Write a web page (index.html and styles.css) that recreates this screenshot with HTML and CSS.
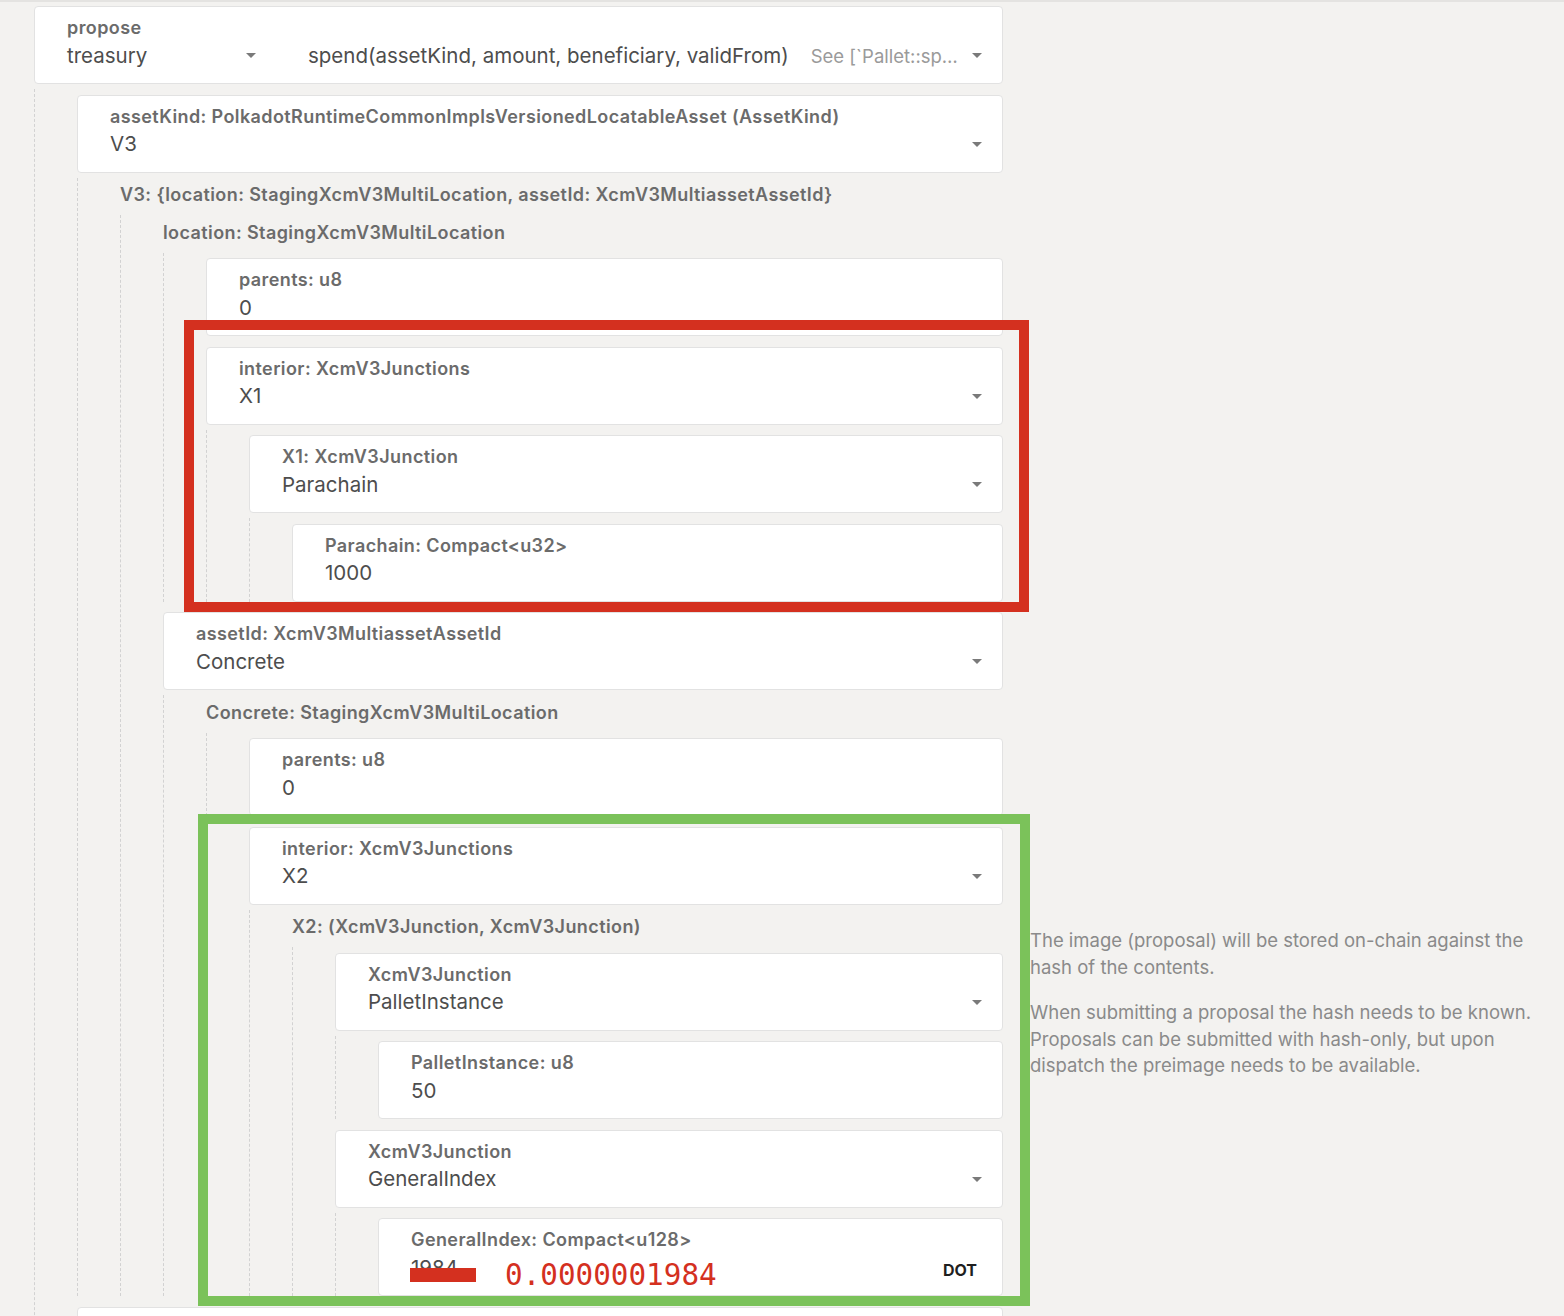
FILE: index.html
```html
<!doctype html>
<html lang="en">
  <head>
    <meta charset="UTF-8" />
    <meta name="viewport" content="width=device-width, initial-scale=1.0" />
    <title>Submit preimage</title>
    <link rel="stylesheet" href="styles.css">
  </head>
  <body>
    <main class="page">
      <section class="params">
        <div class="field">
          <div class="card">
            <div class="control control-section">
              <div class="label">propose</div>
              <div class="value-row"><span class="value">treasury</span><i class="caret"></i></div>
            </div>
            <div class="control">
              <div class="label">&nbsp;</div>
              <div class="value-row">
                <span class="value">spend(assetKind, amount, beneficiary, validFrom)</span>
                <span class="method-doc">See [`Pallet::sp…</span>
                <i class="caret"></i>
              </div>
            </div>
          </div>
          <div class="nest">
            <div class="field">
              <div class="card">
                <div class="control">
                  <div class="label">assetKind: PolkadotRuntimeCommonImplsVersionedLocatableAsset (AssetKind)</div>
                  <div class="value-row"><span class="value">V3</span><i class="caret"></i></div>
                </div>
              </div>
              <div class="nest">
                <div class="field">
                  <div class="struct-label">V3: {location: StagingXcmV3MultiLocation, assetId: XcmV3MultiassetAssetId}</div>
                  <div class="nest">
                    <div class="field">
                      <div class="struct-label">location: StagingXcmV3MultiLocation</div>
                      <div class="nest">
                        <div class="card">
                          <div class="control">
                            <div class="label">parents: u8</div>
                            <div class="value-row"><span class="value">0</span></div>
                          </div>
                        </div>
                        <div class="field">
                          <div class="card">
                            <div class="control">
                              <div class="label">interior: XcmV3Junctions</div>
                              <div class="value-row"><span class="value">X1</span><i class="caret"></i></div>
                            </div>
                          </div>
                          <div class="nest">
                            <div class="field">
                              <div class="card">
                                <div class="control">
                                  <div class="label">X1: XcmV3Junction</div>
                                  <div class="value-row"><span class="value">Parachain</span><i class="caret"></i></div>
                                </div>
                              </div>
                              <div class="nest">
                                <div class="card">
                                  <div class="control">
                                    <div class="label">Parachain: Compact&lt;u32&gt;</div>
                                    <div class="value-row"><span class="value">1000</span></div>
                                  </div>
                                </div>
                              </div>
                            </div>
                          </div>
                        </div>
                      </div>
                    </div>
                    <div class="field">
                      <div class="card">
                        <div class="control">
                          <div class="label">assetId: XcmV3MultiassetAssetId</div>
                          <div class="value-row"><span class="value">Concrete</span><i class="caret"></i></div>
                        </div>
                      </div>
                      <div class="nest">
                        <div class="field">
                          <div class="struct-label">Concrete: StagingXcmV3MultiLocation</div>
                          <div class="nest">
                            <div class="card">
                              <div class="control">
                                <div class="label">parents: u8</div>
                                <div class="value-row"><span class="value">0</span></div>
                              </div>
                            </div>
                            <div class="field">
                              <div class="card">
                                <div class="control">
                                  <div class="label">interior: XcmV3Junctions</div>
                                  <div class="value-row"><span class="value">X2</span><i class="caret"></i></div>
                                </div>
                              </div>
                              <div class="nest">
                                <div class="field">
                                  <div class="struct-label">X2: (XcmV3Junction, XcmV3Junction)</div>
                                  <div class="nest">
                                    <div class="field">
                                      <div class="card">
                                        <div class="control">
                                          <div class="label">XcmV3Junction</div>
                                          <div class="value-row"><span class="value">PalletInstance</span><i class="caret"></i></div>
                                        </div>
                                      </div>
                                      <div class="nest">
                                        <div class="card">
                                          <div class="control">
                                            <div class="label">PalletInstance: u8</div>
                                            <div class="value-row"><span class="value">50</span></div>
                                          </div>
                                        </div>
                                      </div>
                                    </div>
                                    <div class="field">
                                      <div class="card">
                                        <div class="control">
                                          <div class="label">XcmV3Junction</div>
                                          <div class="value-row"><span class="value">GeneralIndex</span><i class="caret"></i></div>
                                        </div>
                                      </div>
                                      <div class="nest">
                                        <div class="card">
                                          <div class="control">
                                            <div class="label">GeneralIndex: Compact&lt;u128&gt;</div>
                                            <div class="value-row"><span class="value">1984</span><span class="unit">DOT</span></div>
                                          </div>
                                        </div>
                                      </div>
                                    </div>
                                  </div>
                                </div>
                              </div>
                            </div>
                          </div>
                        </div>
                      </div>
                    </div>
                  </div>
                </div>
              </div>
            </div>
            <div class="card">
              <div class="control">
                <div class="label">amount: Compact&lt;u128&gt; (AssetBalanceOf)</div>
                <div class="value-row"><span class="value">0</span></div>
              </div>
            </div>
          </div>
        </div>
      </section>

      <aside class="hint">
        <p>The image (proposal) will be stored on-chain against the hash of the contents.</p>
        <p>When submitting a proposal the hash needs to be known. Proposals can be submitted with hash-only, but upon dispatch the preimage needs to be available.</p>
      </aside>

      <!-- review marks drawn over the form -->
      <div class="mark mark-red"></div>
      <div class="mark mark-green"></div>
      <div class="redact"></div>
      <div class="note">0.0000001984</div>
    </main>
  </body>
</html>
```

FILE: styles.css
```css
html,
body {
  height: 100%;
  margin: 0;
  overflow: hidden;
  background: #f3f2f0;
  font-family: 'Inter', 'Liberation Sans', sans-serif;
}
.page {
  position: relative;
  display: grid;
  grid-template-columns: 969px 1fr;
  column-gap: 27px;
  align-items: start;
  border-top: 2px solid #e4e3e1;
  padding: 4px 0 0 34px;
}
.params {
  display: flex;
  flex-direction: column;
  gap: 10.5px;
}
.field {
  display: flex;
  flex-direction: column;
}
.nest {
  display: flex;
  flex-direction: column;
  gap: 10.5px;
  margin-top: 5px;
  padding: 5.5px 0 0 42px;
  border-left: 1px dashed #d2d2d2;
}
.card {
  display: flex;
  box-sizing: border-box;
  height: 78px;
  background: #fff;
  border: 1px solid #e2e2e2;
  border-radius: 4px;
}
.control {
  flex: 1;
  min-width: 0;
  padding: 10px 20px 0 32px;
}
.control-section {
  flex: 0 0 241px;
  box-sizing: border-box;
}
.label,
.struct-label {
  font-size: 18px;
  line-height: 21px;
  font-weight: 600;
  letter-spacing: 0.4px;
  color: #6b6b6b;
  white-space: nowrap;
}
.struct-label {
  padding: 1px 0 5px;
}
.value-row {
  display: flex;
  align-items: center;
  margin-top: 4.5px;
  height: 26px;
}
.value {
  font-size: 20.5px;
  line-height: 26px;
  color: #4d4d4d;
  white-space: nowrap;
}
.method-doc {
  margin-left: 22px;
  font-size: 18.5px;
  color: #9a9a9a;
  white-space: nowrap;
}
.caret {
  margin-left: auto;
  width: 0;
  height: 0;
  border-left: 5px solid transparent;
  border-right: 5px solid transparent;
  border-top: 5px solid #7a7a7a;
}
.unit {
  margin-left: auto;
  margin-right: 5px;
  padding-top: 4px;
  font-size: 16px;
  font-weight: 700;
  color: #1f1f1f;
}
.hint {
  padding: 921px 20px 0 0;
  font-size: 18.5px;
  line-height: 26.5px;
  color: #8a8a8a;
}
.hint p {
  margin: 0 0 19px;
}
.mark {
  position: absolute;
  box-sizing: border-box;
  border: 10px solid;
  pointer-events: none;
}
.mark-red {
  left: 184px;
  top: 318px;
  width: 845px;
  height: 292px;
  border-color: #d4301f;
}
.mark-green {
  left: 198px;
  top: 812px;
  width: 832px;
  height: 492px;
  border-color: #7bc25a;
}
.redact {
  position: absolute;
  left: 410px;
  top: 1266px;
  width: 66px;
  height: 14px;
  background: #d4301f;
}
.note {
  position: absolute;
  left: 505px;
  top: 1259px;
  font-family: 'DejaVu Sans Mono', monospace;
  font-size: 29.3px;
  line-height: 29px;
  color: #d4301f;
}
```
